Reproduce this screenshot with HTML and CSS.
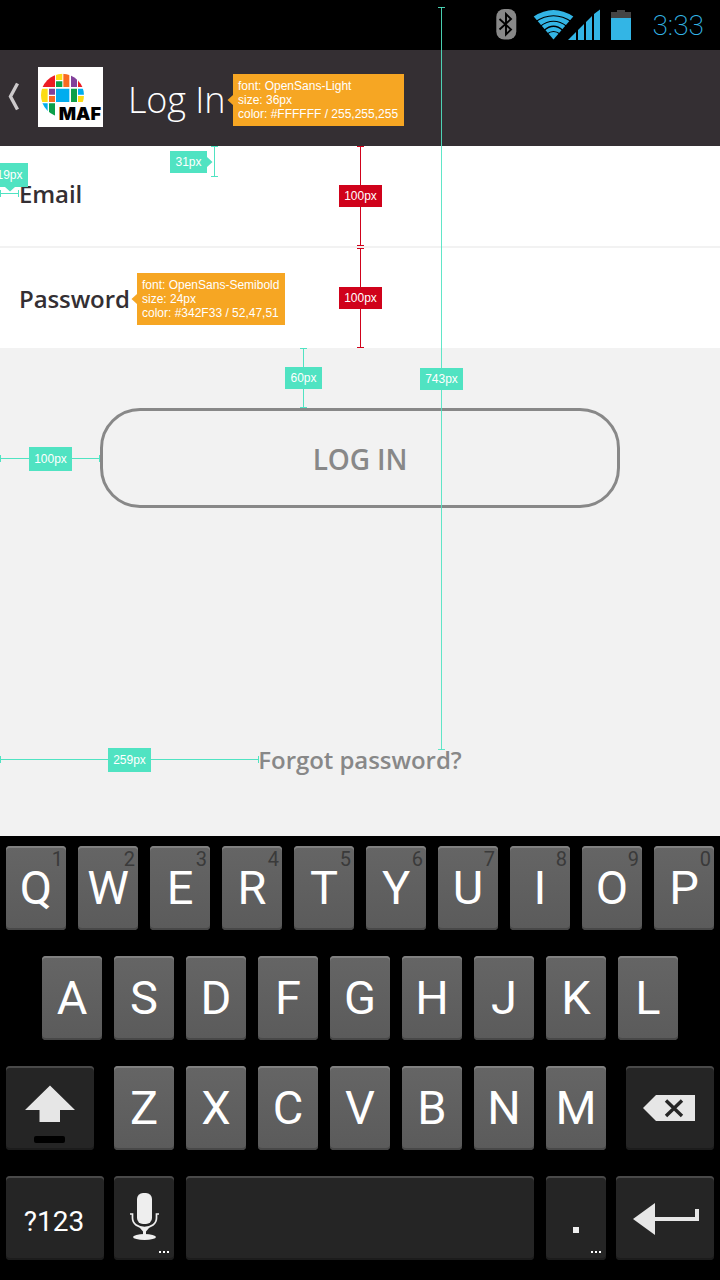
FILE: index.html
```html
<!DOCTYPE html>
<html lang="en">
<head>
<meta charset="utf-8">
<title>Log In</title>
<link rel="stylesheet" href="styles.css">
</head>
<body>
<div class="screen">
  <div class="statusbar">
    <svg class="status-icons" width="160" height="50" viewBox="480 0 160 50">
      <rect x="496.300" y="9" width="20" height="30.500" rx="8" fill="#888"/>
      <path d="M499.500 19L511 29.500L506 34.500V14L511 19L499.500 29.500" fill="none" stroke="#000" stroke-width="1.900"/>
      <path d="M553.500 39.500L533.700 16.500Q553.500 3.500 573.300 16.500Z" fill="#33b5e5"/>
      <path d="M535 22Q553.500 9.500 572 22M540 26.500Q553.500 16 567 26.500M544 30.500Q553.500 22 563 30.500M547 34Q553.500 29 560 34" fill="none" stroke="#000" stroke-width="1.200"/>
      <path d="M568 40L576 32V40ZM578 30L584 24V40H578ZM586 22L592 16V40H586ZM594 14L600 9.500V40H594Z" fill="#33b5e5"/>
      <path d="M611 12H617V10H625V12H631V18H611Z" fill="#444"/>
      <path d="M611 18H631V40H611Z" fill="#33b5e5"/>
    </svg>
    <span class="clock">3:33</span>
  </div>

  <header class="appbar">
    <svg class="back" width="12" height="30" viewBox="0 0 12 30"><path d="M9.500 1.500L2.500 14.500L9.500 27.500" fill="none" stroke="#ccc9cb" stroke-width="3.400"/></svg>
    <svg class="logo" width="65" height="60" viewBox="114 51 195 180">
      <defs><clipPath id="globe"><circle cx="187.500" cy="136" r="64.500"/></clipPath></defs>
      <path d="M114 51H309V231H114Z" fill="#fff"/>
      <g clip-path="url(#globe)">
        <path d="M123 70H165V111H123ZM234 70H253V111H234Z" fill="#ed1c24"/>
        <path d="M168 70H187V90H168ZM122 116H143V156H122ZM234 138H253V156H234Z" fill="#fcdc14"/>
        <path d="M168 94H187V111H168ZM213 116H231V156H213ZM147 160H165V200H147Z" fill="#0ca04a"/>
        <path d="M190 70H208V111H190ZM147 138H165V156H147Z" fill="#f96a21"/>
        <path d="M213 70H231V111H213ZM147 116H165V134H147Z" fill="#81409a"/>
        <path d="M168 116H208V156H168ZM234 116H253V134H234ZM122 160H143V200H122Z" fill="#00adef"/>
      </g>
      <text class="logo-name" x="176" y="210" textLength="127" lengthAdjust="spacingAndGlyphs">MAF</text>
    </svg>
    <h1 class="title">Log In</h1>
  </header>

  <form class="fields">
    <label class="field field-email">Email</label>
    <label class="field">Password</label>
  </form>

  <main class="actions">
    <button class="login" type="button">LOG IN</button>
    <a class="forgot">Forgot password?</a>
  </main>

  <div class="keyboard">
    <div class="row">
      <div class="key">Q<span class="hint">1</span></div><div class="key">W<span class="hint">2</span></div><div class="key">E<span class="hint">3</span></div><div class="key">R<span class="hint">4</span></div><div class="key">T<span class="hint">5</span></div><div class="key">Y<span class="hint">6</span></div><div class="key">U<span class="hint">7</span></div><div class="key">I<span class="hint">8</span></div><div class="key">O<span class="hint">9</span></div><div class="key">P<span class="hint">0</span></div>
    </div>
    <div class="row">
      <div class="key">A</div><div class="key">S</div><div class="key">D</div><div class="key">F</div><div class="key">G</div><div class="key">H</div><div class="key">J</div><div class="key">K</div><div class="key">L</div>
    </div>
    <div class="row row-spread">
      <div class="key dark shift">
        <svg width="88" height="84" viewBox="0 0 88 84"><path d="M44 19.500L69 44H54V56H33.500V44H19Z" fill="#e6e6e6"/><rect x="28" y="70" width="31" height="7" rx="2" fill="#000"/></svg>
      </div>
      <div class="letters">
        <div class="key">Z</div><div class="key">X</div><div class="key">C</div><div class="key">V</div><div class="key">B</div><div class="key">N</div><div class="key">M</div>
      </div>
      <div class="key dark shift">
        <svg width="88" height="84" viewBox="0 0 88 84"><path d="M17 42L30 29H69V55H30Z" fill="#e6e6e6"/><path d="M40 34.500L56 50M56 34.500L40 50" stroke="#262626" stroke-width="3.400"/></svg>
      </div>
    </div>
    <div class="row row-spread">
      <div class="key dark wide symbols">?123</div>
      <div class="letters">
        <div class="key dark">
          <svg width="60" height="84" viewBox="0 0 60 84"><rect x="23" y="17" width="15" height="31" rx="6" fill="#eee"/><path d="M16 38H18.500V42C18.500 48 24 51.500 30.500 51.500S42.500 48 42.500 42V38H45" fill="none" stroke="#eee" stroke-width="1.700"/><path d="M26 52H35L32 55.500V59H29V55.500Z" fill="#eee"/><ellipse cx="30.500" cy="61" rx="11.500" ry="3" fill="#eee"/><path d="M45 75h2v2h-2zM49 75h2v2h-2zM53 75h2v2h-2z" fill="#fff"/></svg>
        </div>
        <div class="key dark space"></div>
        <div class="key dark">
          <svg width="60" height="84" viewBox="0 0 60 84"><path d="M27 51h6v6h-6z" fill="#eee"/><path d="M45 75h2v2h-2zM49 75h2v2h-2zM53 75h2v2h-2z" fill="#fff"/></svg>
        </div>
      </div>
      <div class="key dark wide">
        <svg width="98" height="84" viewBox="0 0 98 84"><path d="M17 43L39 27V41H79V33H83V45H39V59Z" fill="#e6e6e6"/></svg>
      </div>
    </div>
  </div>

  <div class="notes">
    <svg class="rules" width="720" height="1280" viewBox="0 0 720 1280" fill="none">
      <path d="M438 7.500H445M441.500 7V750M438 749.500H445" stroke="#50e3c2" stroke-opacity=".9"/>
      <path d="M357 146.500H364M360.500 146V246M357 245.500H364M357 248.500H364M360.500 248V348M357 347.500H364" stroke="#d0021b"/>
      <path d="M211 146.500H218M214.500 146V177M211 176.500H218M300 348.500H307M303.500 348V408M300 407.500H307M0 193.500H19M.5 190V197M18.500 190V197M0 458.500H100M.5 455V462M99.500 455V462M0 759.500H259M.5 756V763M258.500 756V763" stroke="#50e3c2"/>
      <path d="M207 157L212.500 162L207 167ZM5 187L10 191.500L15 187Z" fill="#50e3c2"/>
      <path d="M233 95L227.500 100L233 105ZM137 294L131.500 299L137 304Z" fill="#f6a623"/>
    </svg>
    <div class="spec spec-title">font: OpenSans-Light<br>size: 36px<br>color: #FFFFFF / 255,255,255</div>
    <div class="spec spec-field">font: OpenSans-Semibold<br>size: 24px<br>color: #342F33 / 52,47,51</div>
    <span class="tag tag-inset">19px</span>
    <span class="tag tag-top">31px</span>
    <span class="tag red tag-row1">100px</span>
    <span class="tag red tag-row2">100px</span>
    <span class="tag tag-gap">60px</span>
    <span class="tag tag-height">743px</span>
    <span class="tag tag-margin">100px</span>
    <span class="tag tag-link">259px</span>
  </div>
</div>
</body>
</html>
```
FILE: styles.css
```css
* { box-sizing: border-box; }
body { margin: 0; background: #000; }
.screen {
  position: relative;
  width: 720px;
  height: 1280px;
  overflow: hidden;
  display: flex;
  flex-direction: column;
  font-family: "Open Sans", sans-serif;
}
svg { display: block; flex: none; }

.statusbar {
  height: 50px;
  background: #000;
  display: flex;
  justify-content: flex-end;
  align-items: center;
  padding-right: 16px;
}
.clock {
  width: 64px;
  padding-top: 1px;
  text-align: right;
  font: 200 28px/50px Roboto, sans-serif;
  color: #33b5e5;
}

.appbar {
  height: 96px;
  background: #342f33;
  display: flex;
  align-items: center;
  padding-left: 8px;
}
.back { margin-bottom: 3px; }
.logo { margin: 0 25px 0 18px; padding-bottom: 0; position: relative; top: 0; margin-bottom: 2px; }
.logo-name { font: 900 54px Inter, sans-serif; fill: #000; }
.title {
  margin: 0;
  padding-top: 4px;
  font-size: 36px;
  font-weight: 300;
  line-height: 60px;
  letter-spacing: -0.1px;
  color: #fff;
}

.fields { display: grid; gap: 2px; background: #f2f2f2; }
.field {
  height: 100px;
  display: flex;
  align-items: center;
  padding: 0 0 0 19px;
  background: #fff;
  font-size: 24px;
  font-weight: 600;
  letter-spacing: -0.1px;
  color: #342f33;
}
.field-email { padding: 0 0 6px 19px; }

.actions {
  height: 488px;
  background: #f2f2f2;
  display: flex;
  flex-direction: column;
  align-items: center;
  padding-top: 60px;
}
.login {
  width: 520px;
  height: 100px;
  border: 3px solid #888;
  border-radius: 40px;
  background: transparent;
  padding: 2px 0 0;
  font: 600 28px "Open Sans", sans-serif;
  letter-spacing: -0.1px;
  color: #888;
}
.forgot {
  margin-top: 236px;
  font-size: 24px;
  font-weight: 600;
  line-height: 32px;
  letter-spacing: -0.05px;
  color: #888;
}

.keyboard {
  height: 444px;
  background: #000;
  padding: 10px 6px 0;
  display: flex;
  flex-direction: column;
  gap: 26px;
}
.row { display: flex; justify-content: center; gap: 12px; }
.row-spread { justify-content: space-between; gap: 0; }
.letters { display: flex; gap: 12px; }
.key {
  position: relative;
  width: 60px;
  height: 84px;
  border-radius: 4px;
  background: linear-gradient(#656565, #5b5b5b);
  box-shadow: inset 0 2px #808080, inset 0 -2px #484848;
  display: flex;
  justify-content: center;
  font: 400 47px/84px Roboto, sans-serif;
  color: #fff;
}
.dark {
  background: #252525;
  box-shadow: inset 0 2px #494949, inset 0 -2px #1c1c1c;
}
.hint {
  position: absolute;
  top: 1px;
  right: 3px;
  font-size: 20px;
  line-height: 24px;
  color: #3a3a3a;
}
.shift { width: 88px; }
.wide { width: 98px; }
.space { width: 348px; }
.symbols { padding-right: 2px; font-size: 28px; line-height: 91px; }

/* Measurement overlay */
.notes { position: absolute; inset: 0; font: 12px/14px "Liberation Sans", Arial, sans-serif; color: #fff; }
.rules { position: absolute; inset: 0; }
.spec { position: absolute; height: 52px; padding: 5px; background: #f6a623; white-space: nowrap; }
.spec-title { left: 233px; top: 74px; width: 171px; }
.spec-field { left: 137px; top: 273px; width: 148px; }
.tag {
  position: absolute;
  width: 43px;
  height: 22px;
  line-height: 22px;
  text-align: center;
  background: #50e3c2;
}
.red { background: #d0021b; }
.tag-inset { left: -9px; top: 163px; width: 37px; height: 24px; line-height: 24px; }
.tag-top { left: 170px; top: 151px; width: 37px; }
.tag-row1 { left: 339px; top: 185px; }
.tag-row2 { left: 339px; top: 287px; }
.tag-gap { left: 285px; top: 367px; width: 37px; }
.tag-height { left: 420px; top: 368px; }
.tag-margin { left: 29px; top: 447px; height: 24px; line-height: 24px; }
.tag-link { left: 108px; top: 748px; height: 24px; line-height: 24px; }
```
